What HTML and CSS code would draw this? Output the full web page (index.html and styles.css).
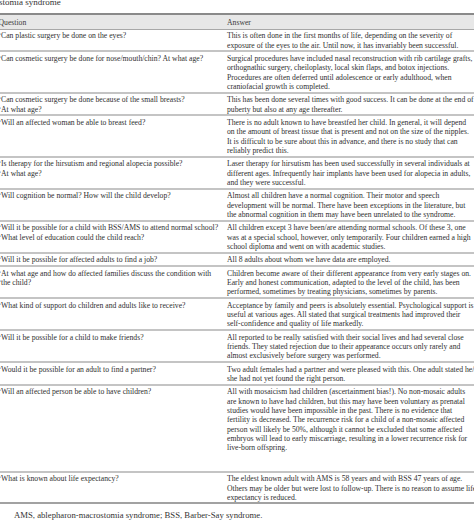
FILE: index.html
```html
<!DOCTYPE html>
<html>
<head>
<meta charset="utf-8">
<link rel="stylesheet" href="styles.css">
</head>
<body>
<div class="page">
  <div class="caption">stomia syndrome</div>
  <table class="qa">
    <thead>
      <tr><th class="q">Question</th><th class="a">Answer</th></tr>
    </thead>
    <tbody>
      <tr>
        <td class="q"><sup>a</sup>Can plastic surgery be done on the eyes?</td>
        <td class="a">This is often done in the first months of life, depending on the severity of<br>exposure of the eyes to the air. Until now, it has invariably been successful.</td>
      </tr>
      <tr>
        <td class="q"><sup>a</sup>Can cosmetic surgery be done for nose/mouth/chin? At what age?</td>
        <td class="a">Surgical procedures have included nasal reconstruction with rib cartilage grafts,<br>orthognathic surgery, cheiloplasty, local skin flaps, and botox injections.<br>Procedures are often deferred until adolescence or early adulthood, when<br>craniofacial growth is completed.</td>
      </tr>
      <tr>
        <td class="q"><sup>a</sup>Can cosmetic surgery be done because of the small breasts?<br><sup>a</sup>At what age?</td>
        <td class="a">This has been done several times with good success. It can be done at the end of<br>puberty but also at any age thereafter.</td>
      </tr>
      <tr>
        <td class="q"><sup>a</sup>Will an affected woman be able to breast feed?</td>
        <td class="a">There is no adult known to have breastfed her child. In general, it will depend<br>on the amount of breast tissue that is present and not on the size of the nipples.<br>It is difficult to be sure about this in advance, and there is no study that can<br>reliably predict this.</td>
      </tr>
      <tr>
        <td class="q"><sup>a</sup>Is therapy for the hirsutism and regional alopecia possible?<br><sup>a</sup>At what age?</td>
        <td class="a">Laser therapy for hirsutism has been used successfully in several individuals at<br>different ages. Infrequently hair implants have been used for alopecia in adults,<br>and they were successful.</td>
      </tr>
      <tr>
        <td class="q"><sup>a</sup>Will cognition be normal? How will the child develop?</td>
        <td class="a">Almost all children have a normal cognition. Their motor and speech<br>development will be normal. There have been exceptions in the literature, but<br>the abnormal cognition in them may have been unrelated to the syndrome.</td>
      </tr>
      <tr>
        <td class="q"><sup>a</sup>Will it be possible for a child with BSS/AMS to attend normal school?<br><sup>a</sup>What level of education could the child reach?</td>
        <td class="a">All children except 3 have been/are attending normal schools. Of these 3, one<br>was at a special school, however, only temporarily. Four children earned a high<br>school diploma and went on with academic studies.</td>
      </tr>
      <tr>
        <td class="q"><sup>a</sup>Will it be possible for affected adults to find a job?</td>
        <td class="a">All 8 adults about whom we have data are employed.</td>
      </tr>
      <tr>
        <td class="q"><sup>a</sup>At what age and how do affected families discuss the condition with<br><sup>a</sup>the child?</td>
        <td class="a">Children become aware of their different appearance from very early stages on.<br>Early and honest communication, adapted to the level of the child, has been<br>performed, sometimes by treating physicians, sometimes by parents.</td>
      </tr>
      <tr>
        <td class="q"><sup>a</sup>What kind of support do children and adults like to receive?</td>
        <td class="a">Acceptance by family and peers is absolutely essential. Psychological support is<br>useful at various ages. All stated that surgical treatments had improved their<br>self-confidence and quality of life markedly.</td>
      </tr>
      <tr>
        <td class="q"><sup>a</sup>Will it be possible for a child to make friends?</td>
        <td class="a">All reported to be really satisfied with their social lives and had several close<br>friends. They stated rejection due to their appearance occurs only rarely and<br>almost exclusively before surgery was performed.</td>
      </tr>
      <tr>
        <td class="q"><sup>a</sup>Would it be possible for an adult to find a partner?</td>
        <td class="a">Two adult females had a partner and were pleased with this. One adult stated he/<br>she had not yet found the right person.</td>
      </tr>
      <tr class="tall">
        <td class="q"><sup>a</sup>Will an affected person be able to have children?</td>
        <td class="a">All with mosaicism had children (ascertainment bias!). No non-mosaic adults<br>are known to have had children, but this may have been voluntary as prenatal<br>studies would have been impossible in the past. There is no evidence that<br>fertility is decreased. The recurrence risk for a child of a non-mosaic affected<br>person will likely be 50%, although it cannot be excluded that some affected<br>embryos will lead to early miscarriage, resulting in a lower recurrence risk for<br>live-born offspring.</td>
      </tr>
      <tr class="last">
        <td class="q"><sup>a</sup>What is known about life expectancy?</td>
        <td class="a">The eldest known adult with AMS is 58 years and with BSS 47 years of age.<br>Others may be older but were lost to follow-up. There is no reason to assume life<br>expectancy is reduced.</td>
      </tr>
    </tbody>
  </table>
  <div class="foot">AMS, ablepharon-macrostomia syndrome; BSS, Barber-Say syndrome.</div>
</div>
</body>
</html>
```
FILE: styles.css
```css
html, body {
  margin: 0;
  padding: 0;
  overflow: hidden;
  background: #ffffff;
}
.page {
  width: 474px;
  height: 522px;
  overflow: hidden;
  font-family: "Liberation Serif", "Times New Roman", serif;
  color: #303030;
}
.caption {
  font-size: 9px;
  line-height: 12px;
  height: 17.5px;
  margin-top: -4.5px;
  margin-left: -1px;
  color: #333333;
}
.qa {
  border-collapse: collapse;
  margin-left: -1.5px;
  width: 540px;
  font-size: 7.7px;
  line-height: 9.3px;
  border-top: 2px solid #8a8a8a;
}
.qa th {
  background: #e7e7e7;
  font-weight: normal;
  text-align: left;
  padding: 2.5px 0 2px 0;
  color: #3c3c3c;
  border-bottom: 1px solid #a8a8a8;
}
.qa td {
  vertical-align: top;
  text-align: left;
  white-space: nowrap;
  padding: 1.6px 0 0.5px 0;
  border-bottom: 2px solid #c4c4c4;
}
.qa .q {
  width: 228.5px;
}
.qa sup {
  font-size: 4.8px;
  line-height: 0;
  vertical-align: 3px;
  margin-right: 0.4px;
  color: #555555;
}
.qa tr.tall td {
  padding-bottom: 18.5px;
}
.qa tr.last td {
  padding-bottom: 0;
  border-bottom: 2px solid #a2a2a2;
}
.foot {
  font-size: 8.7px;
  line-height: 10px;
  margin-top: 6px;
  margin-left: 14px;
  color: #333333;
}
```
